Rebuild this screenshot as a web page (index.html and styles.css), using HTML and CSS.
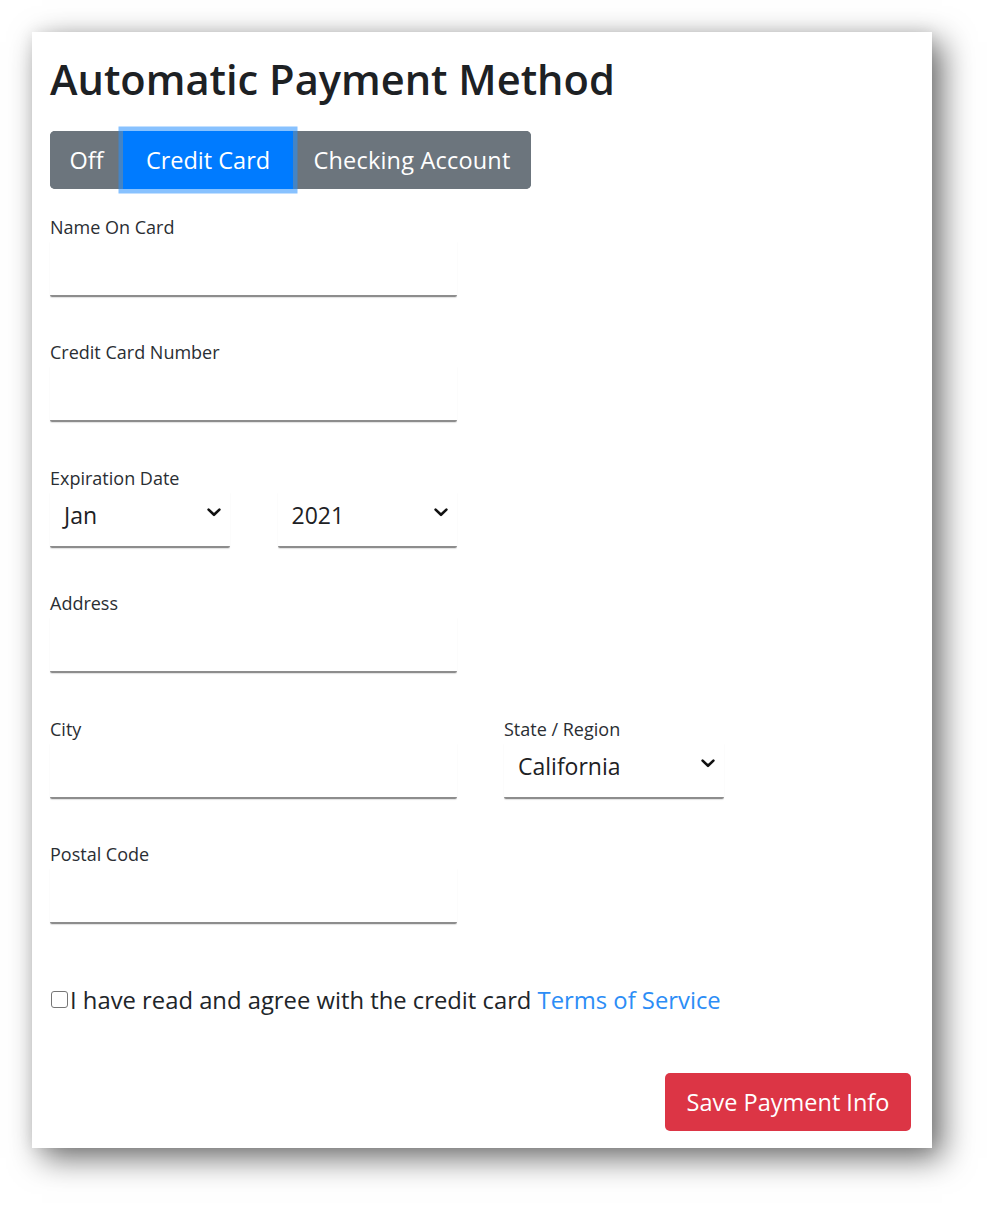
FILE: index.html
```html
<!DOCTYPE html>
<html lang="en">
<head>
<meta charset="utf-8">
<title>Automatic Payment Method</title>
<link rel="stylesheet" href="styles.css">
</head>
<body>
<div class="card">
  <h1 class="title">Automatic Payment Method</h1>
  <div class="btn-group">
    <button class="seg seg-off">Off</button>
    <button class="seg seg-cc active">Credit Card</button>
    <button class="seg seg-chk">Checking Account</button>
  </div>

  <div class="field">
    <label class="label">Name On Card</label>
    <div class="input wide"></div>
  </div>

  <div class="field">
    <label class="label">Credit Card Number</label>
    <div class="input wide"></div>
  </div>

  <div class="field">
    <label class="label">Expiration Date</label>
    <div class="row">
      <div class="input select half">
        <span class="value">Jan</span>
        <svg class="chev" width="14" height="9" viewBox="0 0 14 9"><path d="M1.6 1.6 L7 6.8 L12.4 1.6" fill="none" stroke="#111" stroke-width="2.6" stroke-linecap="round" stroke-linejoin="round"/></svg>
      </div>
      <div class="input select half">
        <span class="value">2021</span>
        <svg class="chev" width="14" height="9" viewBox="0 0 14 9"><path d="M1.6 1.6 L7 6.8 L12.4 1.6" fill="none" stroke="#111" stroke-width="2.6" stroke-linecap="round" stroke-linejoin="round"/></svg>
      </div>
    </div>
  </div>

  <div class="field">
    <label class="label">Address</label>
    <div class="input wide"></div>
  </div>

  <div class="field-row">
    <div class="field city">
      <label class="label">City</label>
      <div class="input wide"></div>
    </div>
    <div class="field state">
      <label class="label">State / Region</label>
      <div class="input select state-select">
        <span class="value">California</span>
        <svg class="chev" width="14" height="9" viewBox="0 0 14 9"><path d="M1.6 1.6 L7 6.8 L12.4 1.6" fill="none" stroke="#111" stroke-width="2.6" stroke-linecap="round" stroke-linejoin="round"/></svg>
      </div>
    </div>
  </div>

  <div class="field">
    <label class="label">Postal Code</label>
    <div class="input wide"></div>
  </div>

  <div class="agree">
    <span class="checkbox"></span><span class="agree-text">I have read and agree with the credit card <a class="link" href="#">Terms of Service</a></span>
  </div>

  <div class="footer">
    <button class="save">Save Payment Info</button>
  </div>
</div>
</body>
</html>
```

FILE: styles.css
```css
html, body {
  margin: 0;
  padding: 0;
  background: #ffffff;
}

body {
  font-family: "Open Sans", "Noto Sans", "Liberation Sans", sans-serif;
  color: #212529;
  padding-bottom: 65px;
}

.card {
  margin: 32px 0 0 32px;
  width: 900px;
  box-sizing: border-box;
  padding: 23px 21px 17px 18px;
  background: #ffffff;
  box-shadow: 10px 10px 30px rgba(0, 0, 0, 0.58), 0 0 14px rgba(0, 0, 0, 0.07);
}

.title {
  margin: 0;
  font-size: 41.6px;
  line-height: 48px;
  font-weight: 600;
  color: #1d2124;
}

.btn-group {
  margin-top: 28px;
  display: inline-flex;
  height: 58px;
  border-radius: 5px;
  background: #6c757d;
}

.seg {
  border: none;
  margin: 0;
  padding: 0;
  height: 58px;
  background: #6c757d;
  color: #ffffff;
  font-family: inherit;
  font-size: 23.5px;
  line-height: 58px;
  text-align: center;
}

.seg-off {
  width: 73px;
  border-radius: 5px 0 0 5px;
}

.seg-cc {
  width: 170px;
}

.seg-chk {
  width: 238px;
  border-radius: 0 5px 5px 0;
  letter-spacing: 0.2px;
}

.seg.active {
  background: #007bff;
  position: relative;
  z-index: 1;
  box-shadow: 0 0 0 4.5px rgba(38, 143, 255, 0.55);
}

.field {
  margin-top: 24.5px;
}

.field + .field,
.field + .field-row,
.field-row + .field {
  margin-top: 42.5px;
}

.label {
  display: block;
  font-size: 18px;
  line-height: 27px;
  color: #2a2e33;
}

.input {
  height: 56px;
  box-sizing: border-box;
  border-bottom: 2px solid #8d8d8d;
  border-radius: 0 0 2px 2px;
  box-shadow: 0 1px 1px rgba(0, 0, 0, 0.12);
}

.wide {
  width: 407px;
}

.row {
  display: flex;
  gap: 48px;
  width: 407px;
}

.half {
  width: 179.5px;
}

.select {
  display: flex;
  align-items: center;
  justify-content: space-between;
  padding: 0 9px 8px 14px;
}

.value {
  font-size: 23px;
  line-height: 32px;
  color: #1d2124;
}

.chev {
  display: block;
  margin-top: -4px;
}

.field-row {
  display: flex;
  gap: 47px;
}

.field-row .field {
  margin-top: 0;
}

.state-select {
  width: 220px;
}

.agree {
  margin-top: 60px;
  display: flex;
  align-items: center;
  height: 32px;
}

.checkbox {
  width: 15px;
  height: 15px;
  border: 1.5px solid #767676;
  border-radius: 3px;
  margin: 0 2px 2px 1px;
  flex: none;
}

.agree-text {
  font-size: 23.8px;
  line-height: 32px;
  color: #212529;
}

.link {
  color: #2c8df6;
  text-decoration: none;
}

.footer {
  display: flex;
  justify-content: flex-end;
  margin-top: 57px;
}

.save {
  width: 246px;
  height: 58px;
  border: none;
  border-radius: 5px;
  background: #dc3545;
  color: #ffffff;
  font-family: inherit;
  font-size: 23.5px;
  line-height: 58px;
  padding: 0;
}
```
